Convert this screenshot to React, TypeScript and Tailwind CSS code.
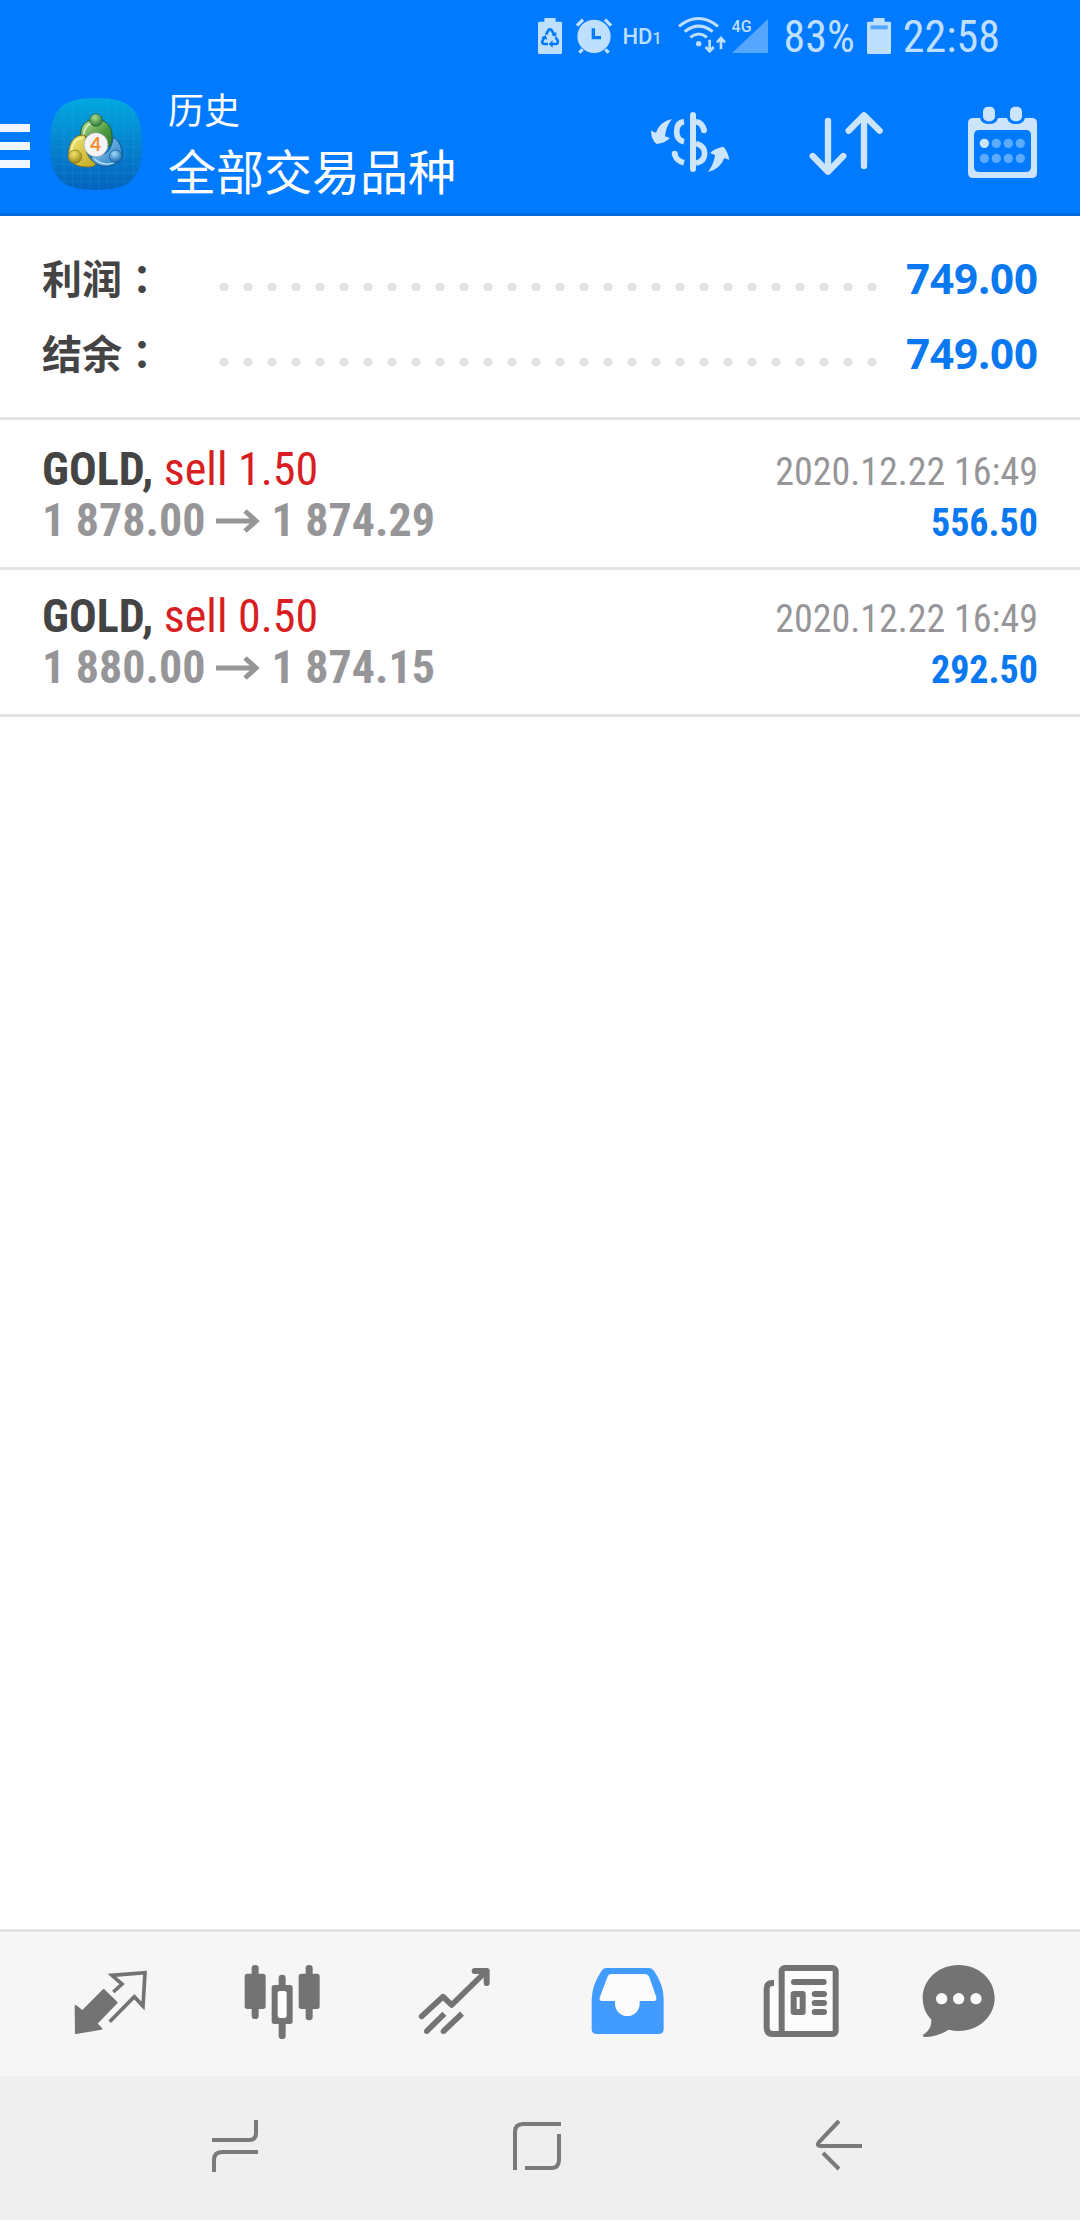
import type { ReactNode } from "react";
import { clsx } from "clsx";

const deals = [
  { id: 1, symbol: "GOLD", side: "sell", volume: "1.50", open: "1 878.00", close: "1 874.29", time: "2020.12.22 16:49", profit: "556.50" },
  { id: 2, symbol: "GOLD", side: "sell", volume: "0.50", open: "1 880.00", close: "1 874.15", time: "2020.12.22 16:49", profit: "292.50" },
];

const totals = [
  { label: "利润：", value: "749.00" },
  { label: "结余：", value: "749.00" },
];

const condensed = "font-['Roboto_Condensed','Liberation_Sans_Narrow',Roboto,sans-serif]";

/* ---------- Status bar ---------- */

const StatusBar = () => (
  <div className="flex h-[72px] items-center justify-end pr-20 text-[#bfdfff]">
    <svg className="h-[72px] w-6" viewBox="60 0 72 216" fill="currentColor">
      <path d="M64 65H79V57Q79 54 82 54H110Q113 54 113 57V65H128Q132 65 132 69V158Q132 162 128 162H64Q60 162 60 158V69Q60 65 64 65Z" />
      <g fill="none" stroke="#007aff" strokeWidth="8">
        <path d="M84 104L91 91Q96 85 101 91L108 103" />
        <path d="M113 112L119 122Q122 132 112 132H100" />
        <path d="M90 132H79Q70 131 74 121L80 111" />
      </g>
      <path d="M115 96V110L100 106ZM104 121V143L92 132ZM70 113L83 105L88 119Z" fill="#007aff" />
    </svg>

    <svg className="ml-[14px] h-[72px] w-9" viewBox="175 0 108 216" fill="currentColor">
      <path
        fillRule="evenodd"
        d="M229 59A50 50 0 1 1 229 159A50 50 0 1 1 229 59ZM222 85V118H250V108H232V85Z"
      />
      <path
        d="M178 77L196 59M280 77L262 59M195 148L185 158M263 148L273 158"
        fill="none"
        stroke="currentColor"
        strokeWidth="10"
      />
    </svg>

    <span className="ml-[10px] font-[Roboto,sans-serif] text-[22px] font-medium">
      HD<span className="text-base">1</span>
    </span>

    <svg className="ml-4 h-[72px] w-[49px]" viewBox="474 0 147 216" fill="none" stroke="currentColor" strokeWidth="9">
      <path d="M477 79Q535 32 594 79" />
      <path d="M494 95Q536 62 578 95" />
      <path d="M511 112Q536 92 561 112" />
      <circle cx="536" cy="131" r="8" fill="currentColor" stroke="none" />
      <path d="M569 119V152M557 141L569 154L581 141" strokeWidth="8" />
      <path d="M603 148V116M591 127L603 114L615 127" strokeWidth="8" />
    </svg>

    <span className="relative ml-[5px] block h-[72px] w-9">
      <svg className="h-[72px] w-9" viewBox="0 0 36 72">
        <path d="M0 53L36 19V53Z" fill="#55a6ff" />
      </svg>
      <span className="absolute top-[18px] left-0 font-[Roboto,sans-serif] text-base leading-[18px] font-medium">4G</span>
    </span>

    <span className={clsx(condensed, "ml-4 pt-0.5 text-[44px]")}>83%</span>

    <svg className="ml-3 h-[72px] w-6" viewBox="1038 0 72 216" fill="currentColor">
      <path d="M1042 65H1057V57Q1057 54 1060 54H1088Q1091 54 1091 57V65H1106Q1110 65 1110 69V158Q1110 162 1106 162H1042Q1038 162 1038 158V69Q1038 65 1042 65Z" />
      <path d="M1049 76H1100V88H1049Z" fill="#55a6ff" />
    </svg>

    <span className={clsx(condensed, "ml-3 pt-0.5 text-[44px]")}>22:58</span>
  </div>
);

/* ---------- App logo ---------- */

const Logo = () => (
  <svg className="ml-5 h-[92px] w-[92px] shrink-0" viewBox="13 12 276 276">
    <defs>
      <linearGradient id="tile" x1="0" y1="0" x2="0" y2="1">
        <stop offset="0" stopColor="#00a8e0" />
        <stop offset="0.5" stopColor="#0684cf" />
        <stop offset="1" stopColor="#0462bd" />
      </linearGradient>
      <linearGradient id="green" x1="0" y1="0" x2="1" y2="1">
        <stop offset="0" stopColor="#c2e2a0" />
        <stop offset="0.6" stopColor="#4c9a3f" />
        <stop offset="1" stopColor="#2f7a35" />
      </linearGradient>
      <linearGradient id="yellow" x1="0" y1="0" x2="1" y2="1">
        <stop offset="0" stopColor="#f3ec7c" />
        <stop offset="1" stopColor="#bfa41c" />
      </linearGradient>
      <linearGradient id="blue" x1="0" y1="0" x2="1" y2="1">
        <stop offset="0" stopColor="#9ed4f5" />
        <stop offset="1" stopColor="#1c78c4" />
      </linearGradient>
      <radialGradient id="greenBall" cx="0.4" cy="0.3" r="0.7">
        <stop offset="0" stopColor="#a8dc90" />
        <stop offset="1" stopColor="#2c7838" />
      </radialGradient>
      <radialGradient id="yellowBall" cx="0.4" cy="0.3" r="0.7">
        <stop offset="0" stopColor="#f2e468" />
        <stop offset="1" stopColor="#a08818" />
      </radialGradient>
      <radialGradient id="blueBall" cx="0.4" cy="0.3" r="0.7">
        <stop offset="0" stopColor="#a0dcfa" />
        <stop offset="1" stopColor="#1566b4" />
      </radialGradient>
      <clipPath id="tileClip">
        <path d="M151 12C255 12 289 46 289 150S255 288 151 288S13 254 13 150S47 12 151 12Z" />
      </clipPath>
    </defs>
    <g clipPath="url(#tileClip)">
      <path d="M13 12H289V288H13Z" fill="url(#tile)" />
      <path
        d="M55 12V288M81 12V288M107 12V288M133 12V288M159 12V288M185 12V288M211 12V288M237 12V288M263 12V288M13 55H289M13 81H289M13 107H289M13 133H289M13 159H289M13 185H289M13 211H289M13 237H289M13 263H289"
        stroke="#48c4ec"
        strokeOpacity="0.22"
        strokeWidth="2"
      />
    </g>
    <path d="M106 130C100 92 124 76 150 76S202 92 199 136C199 156 190 160 184 156L176 128C172 116 130 116 126 128Z" fill="url(#green)" stroke="#1c5e36" strokeWidth="3" />
    <path d="M114 124C116 98 130 86 150 84" fill="none" stroke="#d8f0c4" strokeWidth="4" />
    <path d="M118 124C90 120 70 140 68 184C70 208 104 226 146 216L152 206C128 198 116 172 122 146Z" fill="url(#yellow)" stroke="#86751c" strokeWidth="3" />
    <path d="M78 170C78 150 92 134 112 132" fill="none" stroke="#fbf6ac" strokeWidth="4" />
    <path d="M202 130C222 140 230 162 230 188C222 210 180 230 150 208C136 198 134 190 142 186L180 178C194 168 200 150 202 130Z" fill="url(#blue)" stroke="#135490" strokeWidth="3" />
    <path d="M148 196C164 212 190 214 210 204" fill="none" stroke="#c8e8fa" strokeWidth="4" />
    <circle cx="151" cy="78" r="19" fill="url(#greenBall)" stroke="#1c5e36" strokeWidth="2" />
    <circle cx="88" cy="188" r="20" fill="url(#yellowBall)" stroke="#86751c" strokeWidth="2" />
    <circle cx="210" cy="187" r="19" fill="url(#blueBall)" stroke="#135490" strokeWidth="2" />
    <circle cx="151" cy="152" r="36" fill="#f4f4f6" stroke="#9aa4ac" strokeWidth="2" />
    <text x="150" y="172" textAnchor="middle" fontFamily="Lato, sans-serif" fontSize="56" fontWeight="700" fill="#f58a2c">
      4
    </text>
  </svg>
);

/* ---------- Header ---------- */

const ToolButton = ({ label, viewBox, children }: { label: string; viewBox: string; children: ReactNode }) => (
  <button type="button" aria-label={label} className="text-[#cde5fc]">
    <svg className="h-[108px] w-[108px]" viewBox={viewBox} fill="none" stroke="currentColor" strokeLinecap="round" strokeLinejoin="round">
      {children}
    </svg>
  </button>
);

const Header = () => (
  <header className="border-b-[3px] border-[#006bdf] bg-[#007aff]">
    <StatusBar />
    <div className="flex h-[141px] items-center pt-[3px] pr-6">
      <button type="button" aria-label="菜单" className="flex w-[30px] flex-col gap-[10px] pt-1">
        <span className="h-2 bg-[#f0f7ff]" />
        <span className="h-2 bg-[#f0f7ff]" />
        <span className="h-2 bg-[#f0f7ff]" />
      </button>
      <Logo />
      <div className="ml-[26px] grow pb-1.5 text-white">
        <p className="text-4xl leading-[56px]">历史</p>
        <h1 className="text-5xl leading-[66px]">全部交易品种</h1>
      </div>

      <div className="flex gap-12">
        <ToolButton label="交易品种" viewBox="18 0 324 324">
          <path d="M189 75V237" strokeWidth="18" />
          <path d="M162 95Q140 98 140 125Q140 150 162 155M134 191Q137 212 162 218" strokeWidth="17" strokeLinecap="butt" />
          <path d="M198 95Q218 98 222 122M198 160Q224 168 224 190Q224 214 198 220" strokeWidth="17" strokeLinecap="butt" />
          <circle cx="222" cy="121" r="9" fill="currentColor" stroke="none" />
          <circle cx="134" cy="191" r="9" fill="currentColor" stroke="none" />
          <path d="M126 87Q90 94 78 128L63 122Q63 148 80 162Q104 160 120 144L105 139Q108 108 126 87Z" fill="currentColor" stroke="none" />
          <path d="M234 246Q270 238 283 204L298 210Q294 184 280 170Q256 174 240 189L255 195Q252 222 234 246Z" fill="currentColor" stroke="none" />
        </ToolButton>
        <ToolButton label="排序" viewBox="486 0 324 324">
          <path d="M594 93V244M548 198L594 245L640 198" strokeWidth="19" />
          <path d="M702 228V76M656 122L702 76L749 122" strokeWidth="19" />
        </ToolButton>
        <ToolButton label="日期" viewBox="954 0 324 324">
          <path
            d="M1030 84H1050Q1054 102 1077 102T1104 84H1131Q1135 102 1158 102T1185 84H1206Q1221 84 1221 99V249Q1221 264 1206 264H1029Q1014 264 1014 249V99Q1014 84 1030 84ZM1048 120Q1032 120 1032 136V230Q1032 246 1048 246H1187Q1203 246 1203 230V136Q1203 120 1187 120Z"
            fill="currentColor"
            fillRule="evenodd"
            stroke="none"
          />
          <rect x="1059" y="50" width="36" height="44" rx="15" fill="currentColor" stroke="none" />
          <rect x="1140" y="50" width="36" height="44" rx="15" fill="currentColor" stroke="none" />
          <circle cx="1063" cy="160" r="14" fill="currentColor" stroke="none" />
          <g fill="#5cabff" stroke="none">
            <circle cx="1099" cy="160" r="14" />
            <circle cx="1135" cy="160" r="14" />
            <circle cx="1171" cy="160" r="14" />
            <circle cx="1063" cy="205" r="14" />
            <circle cx="1099" cy="205" r="14" />
            <circle cx="1135" cy="205" r="14" />
            <circle cx="1171" cy="205" r="14" />
          </g>
        </ToolButton>
      </div>
    </div>
  </header>
);

/* ---------- Content ---------- */

const Totals = () => (
  <dl className="border-b-[3px] border-[#e4e4e4] pt-6 pb-[27px]">
    {totals.map(({ label, value }) => (
      <div key={label} className="flex h-[75px] items-center px-[42px]">
        <dt className="w-[170px] pb-0.5 font-['Noto_Sans_CJK_TC',sans-serif] text-[40px] leading-[60px] font-bold text-[#444]">{label}</dt>
        {/* Dotted leader */}
        <dd aria-hidden="true" className="mt-[18px] h-2 grow bg-[radial-gradient(circle,#e4e4e4_4px,transparent_5px)] bg-[length:24px_8px] bg-repeat-x" />
        <dd className="ml-[21px] font-['Noto_Sans',sans-serif] text-[42px] font-bold text-[#0a78f0]">{value}</dd>
      </div>
    ))}
  </dl>
);

const DealList = () => (
  <ul className="mt-[3px]">
    {deals.map((deal) => (
      <li key={deal.id} className={clsx(condensed, "border-b-[3px] border-[#e4e4e4] px-[42px] py-[21px] leading-[51px]")}>
        <div className="flex h-[51px] items-baseline justify-between">
          <p className="text-[46px] leading-[51px] text-[#d91e23]">
            <b className="text-[#444]">{deal.symbol},</b> {deal.side} {deal.volume}
          </p>
          <p className="text-[38px] leading-[51px] text-[#969698]">{deal.time}</p>
        </div>
        <div className="flex h-[51px] items-baseline justify-between font-bold">
          <p className="flex items-center text-[46px] leading-[51px] text-[#969698]">
            {deal.open}
            <svg className="mx-[11px] h-6 w-11" viewBox="0 0 44 24" fill="none" stroke="currentColor" strokeWidth="5">
              <path d="M0 12H40M29 2L40 12L29 22" />
            </svg>
            {deal.close}
          </p>
          <p className="text-[38px] leading-[51px] text-[#0a78f0]">{deal.profit}</p>
        </div>
      </li>
    ))}
  </ul>
);

/* ---------- Bottom tabs ---------- */

const Tab = ({ label, viewBox, active, children }: { label: string; viewBox: string; active?: boolean; children: ReactNode }) => (
  <button
    type="button"
    aria-label={label}
    className={clsx("flex flex-1 items-center justify-center", active ? "text-[#429bff]" : "text-[#737373]")}
  >
    <svg className="h-[108px] w-[108px]" viewBox={viewBox} fill="currentColor">
      {children}
    </svg>
  </button>
);

const BottomTabs = () => (
  <nav className="flex h-[147px] border-t-[3px] border-[#e2e2e2] bg-[#f6f6f6] pr-[18px] pl-6">
    <Tab label="行情" viewBox="49 120 324 324">
      <path d="M105 288L125 304L189 240L228 278L167 341L182 356L106 369Z" stroke="currentColor" strokeWidth="6" strokeLinejoin="round" />
      <path d="M218 246L244 222L214 196L313 188L307 288L281 260L207 335" fill="none" stroke="currentColor" strokeWidth="11" />
    </Tab>
    <Tab label="图表" viewBox="568 120 324 324">
      <rect x="633" y="165" width="21" height="162" rx="10" />
      <rect x="612" y="191" width="63" height="106" rx="8" />
      <rect x="795" y="165" width="21" height="166" rx="10" />
      <rect x="774" y="191" width="63" height="106" rx="8" />
      <rect x="714" y="194" width="21" height="193" rx="10" />
      <rect x="693" y="225" width="63" height="117" rx="8" />
      <rect x="711" y="243" width="27" height="81" rx="7" fill="#fcfcfc" />
    </Tab>
    <Tab label="交易" viewBox="1087 120 324 324">
      <g fill="none" stroke="currentColor" strokeWidth="17">
        <path d="M1143 319L1207 260L1233 285L1334 186" strokeLinecap="round" strokeLinejoin="round" />
        <path d="M1302 183H1338V219" strokeWidth="18" strokeLinecap="round" strokeLinejoin="round" />
        <path d="M1158 364L1211 311M1208 364L1264 311" />
      </g>
      <circle cx="1158" cy="364" r="8" />
      <circle cx="1208" cy="364" r="8" />
    </Tab>
    <Tab label="历史" viewBox="106 120 324 324" active>
      <path d="M196 174H325Q334 174 341 184Q369 225 369 268V357Q369 372 354 372H168Q153 372 153 357V268Q154 225 182 184Q188 174 196 174Z" />
      <path
        d="M212 192H310Q322 192 326 202L346 259Q351 273 339 273H297V281A37 37 0 0 1 223 281V273H185Q173 273 178 260L200 202Q204 192 212 192Z"
        fill="#fcfcfc"
      />
    </Tab>
    <Tab label="新闻" viewBox="625 120 324 324">
      <rect x="683" y="228" width="34" height="135" fill="#fcfcfc" />
      <path d="M700 219H696Q678 219 678 237V352Q678 372 696 372H740" fill="none" stroke="currentColor" strokeWidth="18" />
      <rect x="723" y="174" width="162" height="198" rx="10" fill="#fcfcfc" stroke="currentColor" strokeWidth="18" />
      <rect x="751" y="207" width="107" height="18" rx="9" />
      <rect x="750" y="243" width="45" height="72" rx="9" />
      <rect x="768" y="261" width="9" height="36" fill="#fcfcfc" />
      <rect x="813" y="243" width="46" height="18" rx="9" />
      <rect x="813" y="270" width="46" height="18" rx="9" />
      <rect x="813" y="297" width="46" height="18" rx="9" />
    </Tab>
    <Tab label="消息" viewBox="1144 120 324 324">
      <path d="M1254 165C1314 165 1362 209 1362 264S1314 363 1254 363Q1240 363 1224 359Q1190 381 1152 381Q1143 379 1149 373Q1174 358 1172 329Q1146 304 1146 264C1146 209 1194 165 1254 165Z" />
      <g fill="#fcfcfc">
        <circle cx="1203" cy="266" r="17" />
        <circle cx="1254" cy="266" r="17" />
        <circle cx="1306" cy="266" r="17" />
      </g>
    </Tab>
  </nav>
);

/* ---------- Android navigation ---------- */

const SystemButton = ({ label, children }: { label: string; children: ReactNode }) => (
  <button type="button" aria-label={label} className="flex flex-1 items-center justify-center">
    <svg className="h-[60px] w-[60px]" viewBox="0 0 60 60" fill="none" stroke="#7a7a7a" strokeWidth="4">
      {children}
    </svg>
  </button>
);

const SystemNav = () => (
  <div className="flex h-36 bg-[#efefef] pr-[90px] pl-[84px]">
    <SystemButton label="最近">
      <path d="M7 22H44Q51 22 51 15V2M9 54V42Q9 34 17 34H53" />
    </SystemButton>
    <SystemButton label="主屏幕">
      <path d="M8 52V14Q8 6 16 6H54M52 16V42Q52 50 44 50H18" />
    </SystemButton>
    <SystemButton label="返回">
      <path d="M30 3L10 24Q7 28 12 28H53M14 35L30 51" />
    </SystemButton>
  </div>
);

export default function App() {
  return (
    <div className="flex min-h-screen flex-col bg-white font-['Noto_Sans_CJK_SC',sans-serif]">
      <Header />
      <main className="grow">
        <Totals />
        <DealList />
      </main>
      <BottomTabs />
      <SystemNav />
    </div>
  );
}
